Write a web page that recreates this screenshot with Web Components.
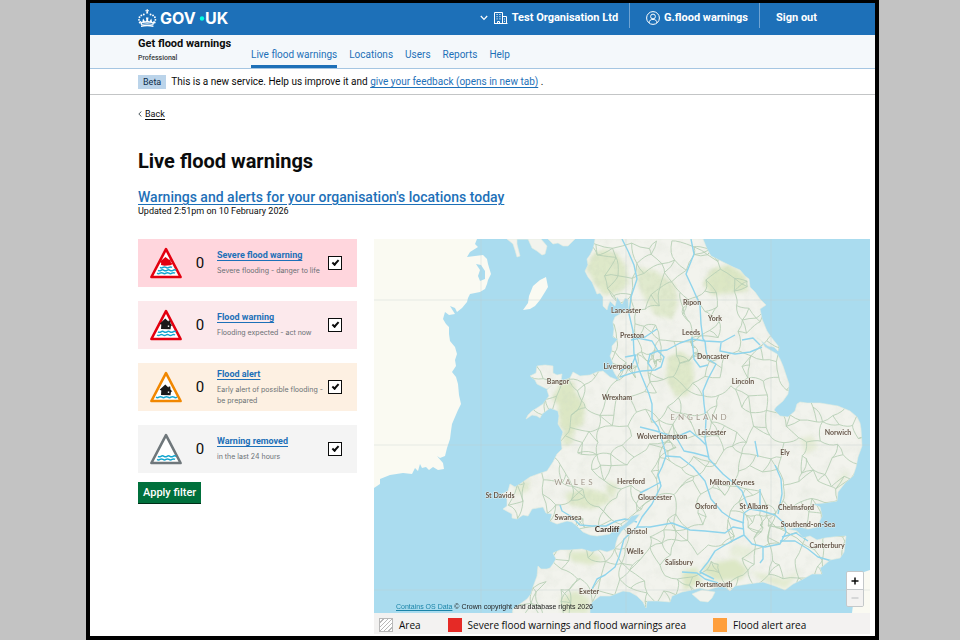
<!DOCTYPE html>
<html lang="en">
<head>
<meta charset="utf-8">
<title>Live flood warnings</title>
<style>
body { margin: 0; background: #c3c3c3; font-family: Roboto, "Liberation Sans", sans-serif; color: #0b0c0c; }
</style>
</head>
<body>
<flood-app></flood-app>

<script>
class Base extends HTMLElement {
  connectedCallback() {
    if (this.shadowRoot) return;
    const t = document.createElement('template');
    t.innerHTML = this.html();
    this.attachShadow({ mode: 'open' }).append(t.content.cloneNode(true));
    if (this.ready) this.ready();
  }
}

customElements.define('flood-app', class extends Base {
  html() { return `
<style>
:host { display: block; box-sizing: border-box; min-height: 100vh; margin: 0 81px 0 86px; border: solid #000; border-width: 3px 4px 4px; background: #fff; }
main { padding: 13px 5px 0 48px; font-size: 9px; line-height: 12px; }
.back { display: inline-block; color: #0b0c0c; text-decoration: none; }
.back svg { width: 4px; height: 6px; margin-right: 3px; }
.back span { border-bottom: 1px solid #0b0c0c; }
h1 { margin: 29px 0 0; font-size: 20px; line-height: 24px; }
h2 { margin: 16px 0 0; font-size: 14px; line-height: 17px; font-weight: 500; }
h2 a { color: #1d70b8; text-decoration-thickness: 1px; text-underline-offset: 2px; }
p { margin: 0; font-size: 9px; line-height: 11px; }
.cols { display: flex; gap: 17px; margin-top: 22px; align-items: flex-start; }
form { flex: 0 0 219px; display: flex; flex-direction: column; gap: 14px; }
button { align-self: flex-start; margin-top: -5px; height: 22px; padding: 0 5px; border: 0; border-bottom: 1px solid #002d18; background: #00703c; color: #fff; font: 500 11px/20px Roboto, sans-serif; }
.map { flex: 1; min-width: 0; }
</style>
<site-header></site-header>
<service-nav></service-nav>
<phase-banner></phase-banner>
<main>
  <a class="back" href="#"><svg viewBox="0 0 4 6" aria-hidden="true"><path d="M3.4.5 .8 3l2.6 2.5" fill="none" stroke="#505a5f"/></svg><span>Back</span></a>
  <h1>Live flood warnings</h1>
  <h2><a href="#">Warnings and alerts for your organisation's locations today</a></h2>
  <p>Updated 2:51pm on 10 February 2026</p>
  <div class="cols">
    <form>
      <warning-card kind="severe" bg="#ffd6dd"><span slot="title">Severe flood warning</span><span slot="text">Severe flooding - danger to life</span></warning-card>
      <warning-card kind="warning" bg="#fce9ec"><span slot="title">Flood warning</span><span slot="text">Flooding expected - act now</span></warning-card>
      <warning-card kind="alert" bg="#fdf0e2"><span slot="title">Flood alert</span><span slot="text">Early alert of possible flooding - be prepared</span></warning-card>
      <warning-card kind="removed" bg="#f4f4f4"><span slot="title">Warning removed</span><span slot="text">in the last 24 hours</span></warning-card>
      <button type="button">Apply filter</button>
    </form>
    <div class="map"><flood-map></flood-map><map-legend></map-legend></div>
  </div>
</main>`; }
});

customElements.define('site-header', class extends Base {
  html() { return `
<style>
:host { display: flex; align-items: flex-start; justify-content: space-between; height: 32px; padding: 0 58px 0 48px; background: #1d70b8; color: #fff; }
a { color: inherit; text-decoration: none; display: flex; align-items: center; }
.logo svg { display: block; width: 94px; height: 18px; margin-top: 6px; }
.logo text { font: 700 16px Inter, sans-serif; }
nav { display: flex; font-size: 11px; font-weight: 700; line-height: 20px; }
nav a { height: 25px; padding-top: 4px; box-sizing: border-box; }
nav a + a { border-left: 1px solid #6fa3d2; padding-left: 16px; }
nav a:not(:last-child) { padding-right: 11px; }
.sym { width: 14px; height: 14px; margin-right: 4px; }
.chev { width: 8px; height: 6px; margin-right: 6px; }
</style>
<a class="logo" href="#" aria-label="GOV.UK"><svg viewBox="0 0 94 18" fill="#fff">
  <path d="M8.700 0h1v1.200h1.300v1.100H9.800l.5 2.200H8.100l.5-2.200H7.400V1.200h1.300z"/>
  <g fill="none" stroke="#fff" stroke-width="1.900" stroke-linecap="round" stroke-dasharray="0 2.700"><path d="M1.700 13.500C-.2 9.500 1.400 5.200 8.500 5.400"/><path d="M16.700 13.500c1.900-4 .3-8.300-6.800-8.100"/></g>
  <path d="M1.600 11.500 3 16q6.200-1.600 12.400 0l1.400-4.500-2.600 1.700-.9-3.600-1.900 2.900-1.400-.9.500-3.100H7.900l.5 3.100-1.400.9-1.900-2.900-.9 3.600z"/>
  <path d="M4 14.600q5.200-1.300 10.400 0" fill="none" stroke="#1d70b8" stroke-width=".8"/>
  <path d="M3 17.900v-1.300q6.200-1.600 12.400 0v1.300q-6.200-1.500-12.400 0z"/>
  <text x="22" y="15">GOV</text><circle cx="64" cy="9.500" r="2.200" fill="#00ffe0"/><text x="67" y="15">UK</text>
</svg></a>
<nav>
  <a href="#"><svg class="chev" viewBox="0 0 8 6"><path d="M.8 1 4 4.400 7.200 1" fill="none" stroke="#fff" stroke-width="1.200"/></svg><svg class="sym" viewBox="0 0 14 14" fill="none" stroke="#fff"><path d="M.5 12.500V1.500h8v11M8.500 5.500h4v7M0 12.500h13.500M3.500 12.500v-2h2v2"/><path d="M2.500 3.500h1.200M5.300 3.500h1.200M2.500 5.700h1.200M5.300 5.700h1.200M2.500 7.900h1.200M5.300 7.900h1.200M10.500 7.500v1M10.500 9.800v1"/></svg>Test Organisation Ltd</a>
  <a href="#"><svg class="sym" viewBox="0 0 14 14" fill="none" stroke="#fff"><circle cx="7" cy="7" r="6.400"/><circle cx="7" cy="5.500" r="2.400"/><path d="M3 12c.2-2.500 1.600-3.600 4-3.600s3.800 1.100 4 3.600"/></svg>G.flood warnings</a>
  <a href="#">Sign out</a>
</nav>`; }
});

customElements.define('service-nav', class extends Base {
  html() { return `
<style>
:host { display: flex; gap: 22px; height: 33px; padding-left: 48px; background: #f4f8fb; border-bottom: 1px solid #a5c6e2; }
.name { display: flex; flex-direction: column; width: 91px; white-space: nowrap; }
strong { font-size: 11px; line-height: 18px; }
small { font-size: 7px; line-height: 10px; font-weight: 500; color: #383b3d; }
nav { display: flex; gap: 12px; }
a { padding-top: 13px; color: #1d70b8; text-decoration: none; height: 17px; border-bottom: 3px solid transparent; font-size: 10px; line-height: 13px; }
a[aria-current] { border-color: #1d70b8; }
</style>
<div class="name"><strong>Get flood warnings</strong><small>Professional</small></div>
<nav><a href="#" aria-current="page">Live flood warnings</a><a href="#">Locations</a><a href="#">Users</a><a href="#">Reports</a><a href="#">Help</a></nav>`; }
});

customElements.define('phase-banner', class extends Base {
  html() { return `
<style>
:host { display: flex; align-items: center; gap: 5px; height: 25px; padding-left: 48px; border-bottom: 1px solid #c3c5c6; font-size: 10px; }
b { font-weight: 400; background: #bbd4ea; color: #0c2d4a; padding: 0 5px; line-height: 14px; font-size: 9px; }
a { color: #1d70b8; text-underline-offset: 2px; }
</style>
<b>Beta</b><span>This is a new service. Help us improve it and <a href="#">give your feedback (opens in new tab)</a> .</span>`; }
});

const WAVE = (y, a, b) => {
  let d = `M${a} ${y}`, up = true;
  for (let x = a; x < b - 1; x += 3) { d += `q1.500 ${up ? 1 : -1} 3 0`; up = !up; }
  return d;
};
const HOUSE = 'M16.300 10.500 10.600 15.800l1.700.6-.3 4.600 9.500.3.500-3.500 1.300-.4-1.800-1.800-.3-3-1.500-.2-.3 1z';
const ICONS = {
  severe: { edge: '#e3000f', body: `<path d="M16.500 11 10.500 16l1.700.8-.2 2.200 3.500.8 6-.6 2.200-1.200-1.900-1.700-.2-2.700-1.600.2z" fill="#e3000f"/>`, waves: [[21.400, 11, 24], [24.300, 9, 26], [27.200, 8, 27]] },
  warning: { edge: '#e3000f', body: `<path d="${HOUSE}" fill="#1a1a1a"/><path d="M18.800 17.500h1.400v1.400h-1.400z" fill="#fff"/>`, waves: [[23.800, 9, 26], [27, 8, 27]] },
  alert: { edge: '#f18700', body: `<g transform="translate(0 4)"><path d="${HOUSE}" fill="#1a1a1a"/><path d="M18.800 17.500h1.400v1.400h-1.400z" fill="#fff"/></g>`, waves: [[27.200, 7, 28]] },
  removed: { edge: '#6f777b', body: '', waves: [[24.300, 9, 26], [27.400, 8, 27]] }
};

customElements.define('warning-card', class extends Base {
  html() {
    const i = ICONS[this.getAttribute('kind')];
    return `
<style>
:host { display: flex; align-items: center; box-sizing: border-box; height: 48px; padding: 0 15px 0 11px; background: ${this.getAttribute('bg')}; }
.icon { flex: none; width: 34px; height: 34px; }
.n { width: 34px; text-align: center; font-size: 15px; line-height: 18px; flex: none; }
.t { flex: 1; min-width: 0; margin-right: -1px; }
a { display: block; font-size: 9px; line-height: 11px; font-weight: 700; color: #1d70b8; text-underline-offset: 2px; }
.d { font: 7px/11px Inter, sans-serif; margin-top: 4px; color: #6a7074; }
input { appearance: none; flex: none; box-sizing: border-box; width: 14px; height: 14px; margin: 0; border: 1px solid #0b0c0c; background: #fff; display: grid; place-items: center; }
input:checked::before { content: ""; width: 7px; height: 4px; border: solid #0b0c0c; border-width: 0 0 2px 2px; box-sizing: border-box; transform: translateY(-1px) rotate(-48deg); }
</style>
<svg class="icon" viewBox="0 0 34 34" aria-hidden="true"><path d="M17 3.200 31.600 31h-29.200z" fill="#fff" stroke="${i.edge}" stroke-width="2.600" stroke-linejoin="round"/>${i.body}<g fill="none" stroke="#12a5cf" stroke-width="1.500">${i.waves.map(w => `<path d="${WAVE(...w)}"/>`).join('')}</g></svg>
<span class="n">0</span>
<div class="t"><a href="#"><slot name="title"></slot></a><div class="d"><slot name="text"></slot></div></div>
<input type="checkbox" checked>`;
  }
  ready() { this.shadowRoot.querySelector('input').setAttribute('aria-label', this.querySelector('[slot=title]').textContent); }
});

customElements.define('map-legend', class extends Base {
  html() { return `
<style>
:host { display: flex; align-items: center; height: 21px; padding: 2px 0 0 5px; box-sizing: border-box; background: #f3f2f1; font: 10px/14px "Open Sans", sans-serif; gap: 27px; margin-bottom: 1px; }
span { display: flex; align-items: center; gap: 6px; }
i { width: 14px; height: 14px; box-sizing: border-box; }
.h { border: 1px solid #b8b8b8; background: repeating-linear-gradient(135deg, #fff 0 2px, #b8b8b8 2px 3px); }
.r { background: #e52a26; } .o { background: #ff9f3c; }
</style>
<span><i class="h"></i>Area</span><span><i class="r"></i>Severe flood warnings and flood warnings area</span><span><i class="o"></i>Flood alert area</span>`; }
});

/* Geography is drawn in a canvas whose origin is (374, 240). */
const GB = 'M595 240 594 246 593 250 590 256 587 260 588 266 585 272 588 278 592 283 595 290 597 295 600 294 603 298 603 307 607 311 608 307 610 302 615 307 616 303 617 298 622 305 625 299 628 300 629 310 620 315 615 318 613 323 614 330 613 338 618 340 612 347 612 352 610 357 613 364 612 369 615 375 620 382 610 378 603 372 597 373 590 376 580 377 573 373 570 379 562 382 556 382 550 388 547 391 549 397 543 405 537 409 532 412 528 416 526 420 532 416 537 417 540 419 542 415 550 409 558 412 559 417 558 425 563 433 561 440 562 450 557 455 553 463 547 472 538 475 530 478 520 485 515 488 510 485 508 492 502 495 507 500 507 507 503 510 512 515 512 519 517 520 523 516 528 517 532 510 543 508 546 514 552 515 550 522 557 525 567 522 572 523 577 527 583 533 590 536 597 537 610 535 614 529 622 527 627 523 631 517 640 515 634 523 627 528 622 532 618 538 616 544 615 550 607 553 600 551 592 553 582 550 570 551 560 551 553 554 556 560 553 565 550 569 547 570 541 570 538 567 537 577 533 588 531 595 527 600 520 605 513 610 512 616 590 616 590 608 592 603 600 597 610 597 623 592 630 593 637 597 643 603 646 609 647 602 658 602 670 603 672 597 682 593 692 591 700 589 708 591 717 588 724 587 730 592 735 587 748 585 763 583 775 587 785 591 793 585 803 580 812 575 822 575 820 569 823 567 830 561 840 559 844 553 845 545 846 537 833 538 825 539 817 541 810 537 803 539 797 532 787 530 800 528 808 530 817 528 822 517 820 508 812 505 824 504 837 502 838 493 845 484 853 477 856 468 858 458 862 447 861 430 860 424 857 418 850 412 838 407 820 404 807 404 800 403 797 405 795 412 788 418 780 417 774 411 776 408 783 402 788 395 789 385 786 376 783 367 780 360 777 355 770 351 765 348 760 340 757 339 763 343 768 347 774 348 778 352 779 348 775 343 771 338 767 332 762 320 760 310 766 306 760 300 755 293 750 288 749 280 745 277 740 271 733 268 723 263 717 260 711 257 707 250 703 240Z';
const ANGLESEY = 'M562 375 557 376 553 374 553 367 545 366 537 367 536 374 530 377 535 381 537 385 547 390 554 385 561 382Z';
const IRELAND = 'M374 240H477L475 245 478 248 470 253 467 258 475 257 483 256 487 260 488 265 491 275 488 281 487 285 485 290 480 293 470 295 468 299 467 303 462 309 457 313 455 309 450 307 455 315 449 316 445 313 443 320 446 325 449 328 449 335 450 342 455 348 457 355 455 361 456 367 452 373 456 378 458 385 459 396 461 405 458 411 455 418 452 425 451 432 450 440 447 449 445 457 440 459 437 457 443 464 444 470 438 471 433 468 429 471 426 468 422 469 420 465 418 472 415 469 412 475 403 474 390 476 380 480 380 485 374 489Z';
const MAN = 'M546 278 548 288 545 293 540 301 535 307 530 310 523 311 528 304 529 297 533 287 540 281Z';
const SCOT = 'M507 240 513 245 515 251 517 258 520 257 517 245 517 240H528L532 249 537 252 542 256 545 255 547 247 541 240ZM548 240 553 245 558 244 563 247 568 247 572 243 575 240Z';
const WIGHT = 'M692 595 702 591 715 593 712 599 708 603 700 602Z';

const PARKS = [
  ['M586 268 594 254 606 250 618 256 626 268 628 285 618 294 604 296 594 284Z', .8],
  ['M637 268 655 272 675 285 678 305 672 320 655 316 645 300 638 285Z', .7],
  ['M703 285 712 270 730 266 745 276 748 292 728 294 712 296Z', .9],
  ['M668 358 682 352 692 362 694 380 688 396 676 398 666 380Z', .8],
  ['M560 385 573 382 576 395 585 405 583 425 568 434 560 428 558 405 552 400Z', .9],
  ['M563 433 575 430 572 445 562 447Z', .7],
  ['M515 488 530 480 528 492 516 496Z', .6],
  ['M565 495 585 489 605 494 612 502 592 510 570 506Z', .8],
  ['M608 482 618 486 614 500 606 492Z', .7],
  ['M568 553 590 552 604 560 590 566 572 562Z', .8],
  ['M560 600 575 592 590 600 588 614 562 614Z', .8],
  ['M682 573 696 568 702 582 684 592Z', .9],
  ['M704 566 735 560 748 570 742 580 716 582 704 574Z', .9],
  ['M750 572 785 580 800 572 786 590 760 580Z', .6],
  ['M800 440 812 436 818 448 806 456Z', .5],
  ['M735 545 755 550 745 560 728 556Z', .4],
  ['M838 480 848 470 846 482 838 490Z', .4]
];
const MOTORWAYS = [
  'M622 240 628 252 634 266 637 280 631 298 629 315 633 332 634 355 638 368 642 378 649 395 652 405 652 420 658 428 664 448 666 457',
  'M691 240 694 255 686 275 693 290 700 306 701 325 703 340 705 342 722 343 735 336',
  'M705 342 706 352 708 360 716 365 708 380 703 392 704 405 706 420 705 440 709 460 723 475 735 485 742 492 748 508',
  'M631 341 645 338 657 330M633 338 652 342 658 352 667 351 680 344 692 340 705 342M692 338 694 360 700 368 708 366',
  'M620 378 632 374 642 372 655 371 661 368 664 358 658 352 650 355 648 364 652 370M620 372 632 366 636 356 625 358',
  'M721 344 720 352 735 355 750 353 762 348M742 341 753 339 760 346',
  'M640 428 656 432 668 436 676 438 690 432 700 440 706 446M676 438 684 452 694 454 709 458',
  'M666 457 680 458 693 468 705 482 711 500 722 513 732 520 744 524',
  'M666 457 662 468 658 476 661 487 652 505 642 518 637 528 650 528 672 524 690 531 705 532 725 534 733 528 744 530',
  'M661 483 648 490 640 494M637 528 624 540 619 558 615 568 605 576 597 580 592 590',
  'M560 506 562 512 572 518 580 526 592 527 606 527 616 522 625 520 637 523',
  'M744 514 750 510 762 512 775 516 784 524 786 533 780 545 765 548 752 545 744 536 743 525 744 514',
  'M744 536 730 543 715 552 708 563 700 573 714 580M682 573 697 574 705 580 718 584',
  'M763 547 763 560 760 564M780 542 795 542 808 550 818 558 832 562M782 538 796 534 808 542',
  'M775 466 781 480 782 495 778 515M760 512 760 490M755 442 758 458'
];
const CITIES = [
  ['Lancaster', 626, 314], ['Ripon', 692, 306], ['York', 715, 322], ['Preston', 632, 339], ['Leeds', 691, 336],
  ['Doncaster', 713, 360], ['Liverpool', 618, 370], ['Lincoln', 743, 385], ['Bangor', 558, 385], ['Wrexham', 617, 401],
  ['Leicester', 712, 436], ['Wolverhampton', 662, 440], ['Norwich', 838, 436], ['Ely', 785, 456], ['Hereford', 631, 485],
  ['Milton Keynes', 732, 486], ['Gloucester', 655, 501], ['Oxford', 706, 510], ['St Albans', 754, 510], ['Chelmsford', 796, 511],
  ['St Davids', 500, 499], ['Swansea', 568, 521], ['Bristol', 637, 535], ['Southend-on-Sea', 808, 528], ['Canterbury', 827, 549],
  ['Wells', 635, 555], ['Salisbury', 679, 566], ['Portsmouth', 714, 588], ['Exeter', 589, 595]
];

/* Minor roads: jittered junctions over the mainland, each joined to its nearest neighbours. */
function roads() {
  let s = 41;
  const rnd = () => (s = (s * 16807) % 2147483647) / 2147483647;
  const pts = [];
  for (let y = 240; y < 620; y += 15) for (let x = 505; x < 866; x += 15) pts.push([x + rnd() * 13, y + rnd() * 13]);
  for (const [cx, cy, n, r] of [[763, 529, 22, 16], [655, 362, 18, 14], [668, 443, 16, 14], [692, 345, 9, 12], [625, 368, 8, 10]])
    for (let i = 0; i < n; i++) { const a = rnd() * 6.28, q = r * rnd(); pts.push([cx + q * Math.cos(a), cy + q * Math.sin(a)]); }
  const seen = new Set();
  let d = '';
  pts.forEach((p, i) => {
    const near = pts.map((q, j) => [Math.hypot(q[0] - p[0], q[1] - p[1]), j]).sort((a, b) => a[0] - b[0]).slice(1, 4);
    for (const [len, j] of near) {
      const k = Math.min(i, j) + '-' + Math.max(i, j);
      if (seen.has(k) || rnd() < .08) continue;
      seen.add(k);
      const q = pts[j], w = len * .5;
      d += `M${p[0].toFixed(1)} ${p[1].toFixed(1)}Q${((p[0] + q[0]) / 2 + (rnd() - .5) * w).toFixed(1)} ${((p[1] + q[1]) / 2 + (rnd() - .5) * w).toFixed(1)} ${q[0].toFixed(1)} ${q[1].toFixed(1)}`;
    }
  });
  return d;
}

customElements.define('flood-map', class extends Base {
  html() { return `
<style>
:host { display: block; position: relative; }
.m { display: block; width: 100%; aspect-ratio: 496 / 374; background: #aadcef; }
text { font: 700 7px Lato, "Open Sans", sans-serif; fill: #66574a; text-anchor: middle; paint-order: stroke; stroke: #f6f6f1; stroke-width: 1px; stroke-opacity: .7; }
.big { font-size: 8px; font-weight: 900; fill: #463a30; }
.nation { font-size: 8px; font-weight: 400; letter-spacing: 3px; fill: #a0978b; }
.credit { position: absolute; left: 22px; bottom: 1px; font: 7px/10px "Liberation Sans", sans-serif; color: #222; }
.credit a { color: #1a84a8; }
.zoom { position: absolute; right: 6px; bottom: 6px; box-sizing: border-box; width: 18px; display: flex; flex-direction: column; border: 1px solid #c4c8ca; border-radius: 2px; overflow: hidden; }
.zoom button { height: 17px; padding: 0; border: 0; background: #fff; display: grid; place-items: center; }
.zoom button:disabled { background: #f3f2f1; border-top: 1px solid #c4c8ca; }
.zoom svg { width: 8px; height: 8px; }
</style>
<svg class="m" viewBox="374 240 496 374" preserveAspectRatio="xMidYMid slice">
  <defs>
    <clipPath id="land"><path d="${GB}"/><path d="${ANGLESEY}"/></clipPath>
    <filter id="soft" x="-20%" y="-20%" width="140%" height="140%"><feGaussianBlur stdDeviation="1.800" result="b"/><feTurbulence type="fractalNoise" baseFrequency=".16" numOctaves="3" seed="4"/><feColorMatrix values="0 0 0 0 .66 0 0 0 0 .74 0 0 0 0 .55 3 0 0 0 -1.300"/><feComposite in2="b" operator="in"/></filter>
    <filter id="blur"><feGaussianBlur stdDeviation="2"/></filter>
    <filter id="relief" x="0" y="0" width="100%" height="100%"><feTurbulence type="fractalNoise" baseFrequency=".09" numOctaves="4" seed="8"/><feColorMatrix values="0 0 0 0 .72 0 0 0 0 .76 0 0 0 0 .68 1.600 0 0 0 -.72"/></filter>
  </defs>
  <g fill="#fafaf2"><path d="${IRELAND}"/><path d="${MAN}"/><path d="M870 571 861 574 855 590 852 614H870Z"/></g>
  <path d="M476 265 481 266 485 272 485 280 480 282 478 277 480 271Z" fill="#aadcef"/>
  <g fill="#f2f3ed" stroke="#e4ecdf" stroke-width=".6"><path d="${GB}"/><path d="${ANGLESEY}"/><path d="${SCOT}"/><path d="${WIGHT}"/></g>
  <g clip-path="url(#land)">
    <rect x="505" y="240" width="365" height="374" filter="url(#relief)" opacity=".45"/>
    <g fill="#d9e6c0" filter="url(#blur)">${PARKS.map(p => `<path d="${p[0]}" opacity="${p[1]}"/>`).join('')}</g>
    <g filter="url(#soft)" opacity=".5">${PARKS.slice(0, 9).map(p => `<path d="${p[0]}"/>`).join('')}</g>
    <path d="${roads()}" fill="none" stroke="#b7cfb6" stroke-width=".9"/>
    <g fill="none" stroke="#8fd4ec" stroke-width="1.400" stroke-linejoin="round">${MOTORWAYS.map(d => `<path d="${d}"/>`).join('')}</g>
  </g>
  <path d="M374 301H870M374 446H870M374 591H870M481 240V614M626 240V614M771 240V614" stroke="#c5cfca" stroke-width=".6" opacity=".6"/>
  <g>${CITIES.map(c => `<text x="${c[1]}" y="${c[2]}">${c[0]}</text>`).join('')}
  <text class="big" x="607" y="533">Cardiff</text>
  <text class="nation" x="700" y="421">ENGLAND</text><text class="nation" x="575" y="486">WALES</text></g>
</svg>
<div class="credit"><a href="#">Contains OS Data</a> © Crown copyright and database rights 2026</div>
<div class="zoom"><button type="button" aria-label="Zoom in"><svg viewBox="0 0 8 8"><path d="M4 .5v7M.5 4h7" stroke="#0b0c0c" stroke-width="1.500"/></svg></button><button type="button" aria-label="Zoom out" disabled><svg viewBox="0 0 8 8"><path d="M.5 4h7" stroke="#b9bcbe"/></svg></button></div>`; }
});
</script>
</body>
</html>
